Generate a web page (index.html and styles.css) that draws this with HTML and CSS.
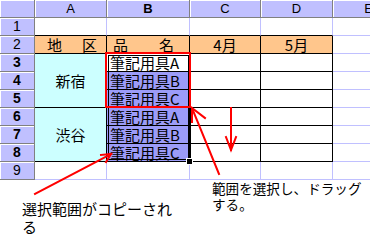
FILE: index.html
```html
<!DOCTYPE html>
<html>

	<head>
		<meta charset="UTF-8">
		<title>範囲のコピー</title>
		<link rel="stylesheet" href="styles.css">
	</head>

	<body>
		<div class="page">
			<div class="sheet">
				<div class="grid">
					<div class="corner"></div>
					<div class="col-hd">A</div>
					<div class="col-hd on">B</div>
					<div class="col-hd">C</div>
					<div class="col-hd">D</div>
					<div class="col-hd">E</div>

					<div class="row-hd">1</div>
					<div class="cell over"></div>
					<div class="cell over"></div>
					<div class="cell over"></div>
					<div class="cell over"></div>
					<div class="cell"></div>

					<div class="row-hd">2</div>
					<div class="cell tbl head spread area"><span>地</span><span>区</span></div>
					<div class="cell tbl head spread item"><span>品</span><span>名</span></div>
					<div class="cell tbl head">4月</div>
					<div class="cell tbl head">5月</div>
					<div class="cell"></div>

					<div class="row-hd on">3</div>
					<div class="cell tbl town">新宿</div>
					<div class="cell tbl name">筆記用具A</div>
					<div class="cell tbl"></div>
					<div class="cell tbl"></div>
					<div class="cell"></div>

					<div class="row-hd on">4</div>
					<div class="cell tbl name picked">筆記用具B</div>
					<div class="cell tbl"></div>
					<div class="cell tbl"></div>
					<div class="cell"></div>

					<div class="row-hd on">5</div>
					<div class="cell tbl name picked">筆記用具C</div>
					<div class="cell tbl"></div>
					<div class="cell tbl"></div>
					<div class="cell"></div>

					<div class="row-hd on">6</div>
					<div class="cell tbl town">渋谷</div>
					<div class="cell tbl name picked">筆記用具A</div>
					<div class="cell tbl"></div>
					<div class="cell tbl"></div>
					<div class="cell"></div>

					<div class="row-hd on">7</div>
					<div class="cell tbl name picked">筆記用具B</div>
					<div class="cell tbl"></div>
					<div class="cell tbl"></div>
					<div class="cell"></div>

					<div class="row-hd on">8</div>
					<div class="cell tbl name picked">筆記用具C</div>
					<div class="cell tbl"></div>
					<div class="cell tbl"></div>
					<div class="cell"></div>

					<div class="row-hd">9</div>
					<div class="cell"></div>
					<div class="cell"></div>
					<div class="cell"></div>
					<div class="cell"></div>
					<div class="cell"></div>
				</div>

				<!-- selection outline, fill handle and the marked source range -->
				<div class="sel-box"></div>
				<div class="handle"></div>
				<div class="red-box"></div>
			</div>

			<div class="notes">
				<p class="note copied">選択範囲がコピーされる</p>
				<p class="note drag">範囲を選択し、ドラッグする。</p>
			</div>

			<svg class="arrows" width="378" height="240" viewBox="0 0 378 240">
				<g fill="none" stroke="#ff0000" stroke-width="2" stroke-linecap="square">
					<line x1="35" y1="194" x2="111" y2="154" />
					<polyline points="101,155 111,154 106,162" />

					<line x1="219" y1="174" x2="192" y2="108" />
					<polyline points="192,122 192,108 205,118" />

					<line x1="231" y1="108" x2="231" y2="150" />
					<polyline points="226,137 231,150 236,137" />
				</g>
			</svg>
		</div>
	</body>

</html>
```

FILE: styles.css
```css
* {
	margin: 0;
	padding: 0;
	border: 0;
	box-sizing: border-box;
}

body {
	background: #fff;
	font-family: "Noto Sans CJK JP", "Liberation Sans", sans-serif;
	color: #000;
}

.page {
	position: relative;
	width: 378px;
	height: 240px;
	overflow: hidden;
}

.sheet {
	position: relative;
	width: 370px;
	overflow: hidden;
}

.grid {
	display: grid;
	grid-template-columns: 35px 72px 83px 71px 72px 72px;
	grid-auto-rows: 18px;
	width: 405px;
}

/* headers */
.corner,
.col-hd,
.row-hd {
	background: #c0c0ff;
	border-right: 1px solid #808080;
	border-bottom: 1px solid #808080;
	box-shadow: inset 1px 1px 0 #fff;
	display: flex;
	align-items: center;
	justify-content: center;
	font-family: "Liberation Sans", sans-serif;
	font-size: 14px;
	line-height: 15px;
}

.col-hd {
	font-size: 13px;
}

.col-hd.on,
.row-hd.on {
	font-weight: bold;
}

.row-hd {
	grid-column: 1;
}

/* cells */
.cell {
	border-right: 1px solid #c0c0ff;
	border-bottom: 1px solid #c0c0ff;
	display: flex;
	align-items: center;
	justify-content: center;
	font-size: 15px;
	line-height: 16px;
	white-space: nowrap;
}

.cell.over {
	border-bottom-color: #000;
}

.cell.tbl {
	border-right-color: #000;
	border-bottom-color: #000;
}

.head {
	background: #ffc68c;
}

.spread {
	justify-content: space-between;
}

.area {
	padding: 0 9px 0 12px;
}

.item {
	padding: 0 15px 0 6px;
}

.town {
	grid-row: span 3;
	background: #ccffff;
}

.name {
	justify-content: flex-start;
	padding-left: 3px;
}

.picked {
	background: #9c9cf8;
}

.sel-box {
	position: absolute;
	left: 106px;
	top: 53px;
	width: 85px;
	height: 109px;
	border: 3px double #000;
}

.handle {
	position: absolute;
	left: 186px;
	top: 158px;
	width: 7px;
	height: 7px;
	background: #000;
	border: 1px solid #fff;
}

.red-box {
	position: absolute;
	left: 105px;
	top: 52px;
	width: 86px;
	height: 56px;
	border: 2px solid #ff0000;
}

/* captions under the sheet */
.notes {
	display: flex;
	align-items: flex-start;
}

.note {
	line-height: 18px;
}

.copied {
	margin: 20px 0 0 22px;
	width: 152px;
	font-size: 15px;
}

.drag {
	margin: 0 0 0 38px;
	width: 158px;
	font-size: 13.6px;
	line-height: 16px;
}

.arrows {
	position: absolute;
	left: 0;
	top: 0;
	pointer-events: none;
}
```
